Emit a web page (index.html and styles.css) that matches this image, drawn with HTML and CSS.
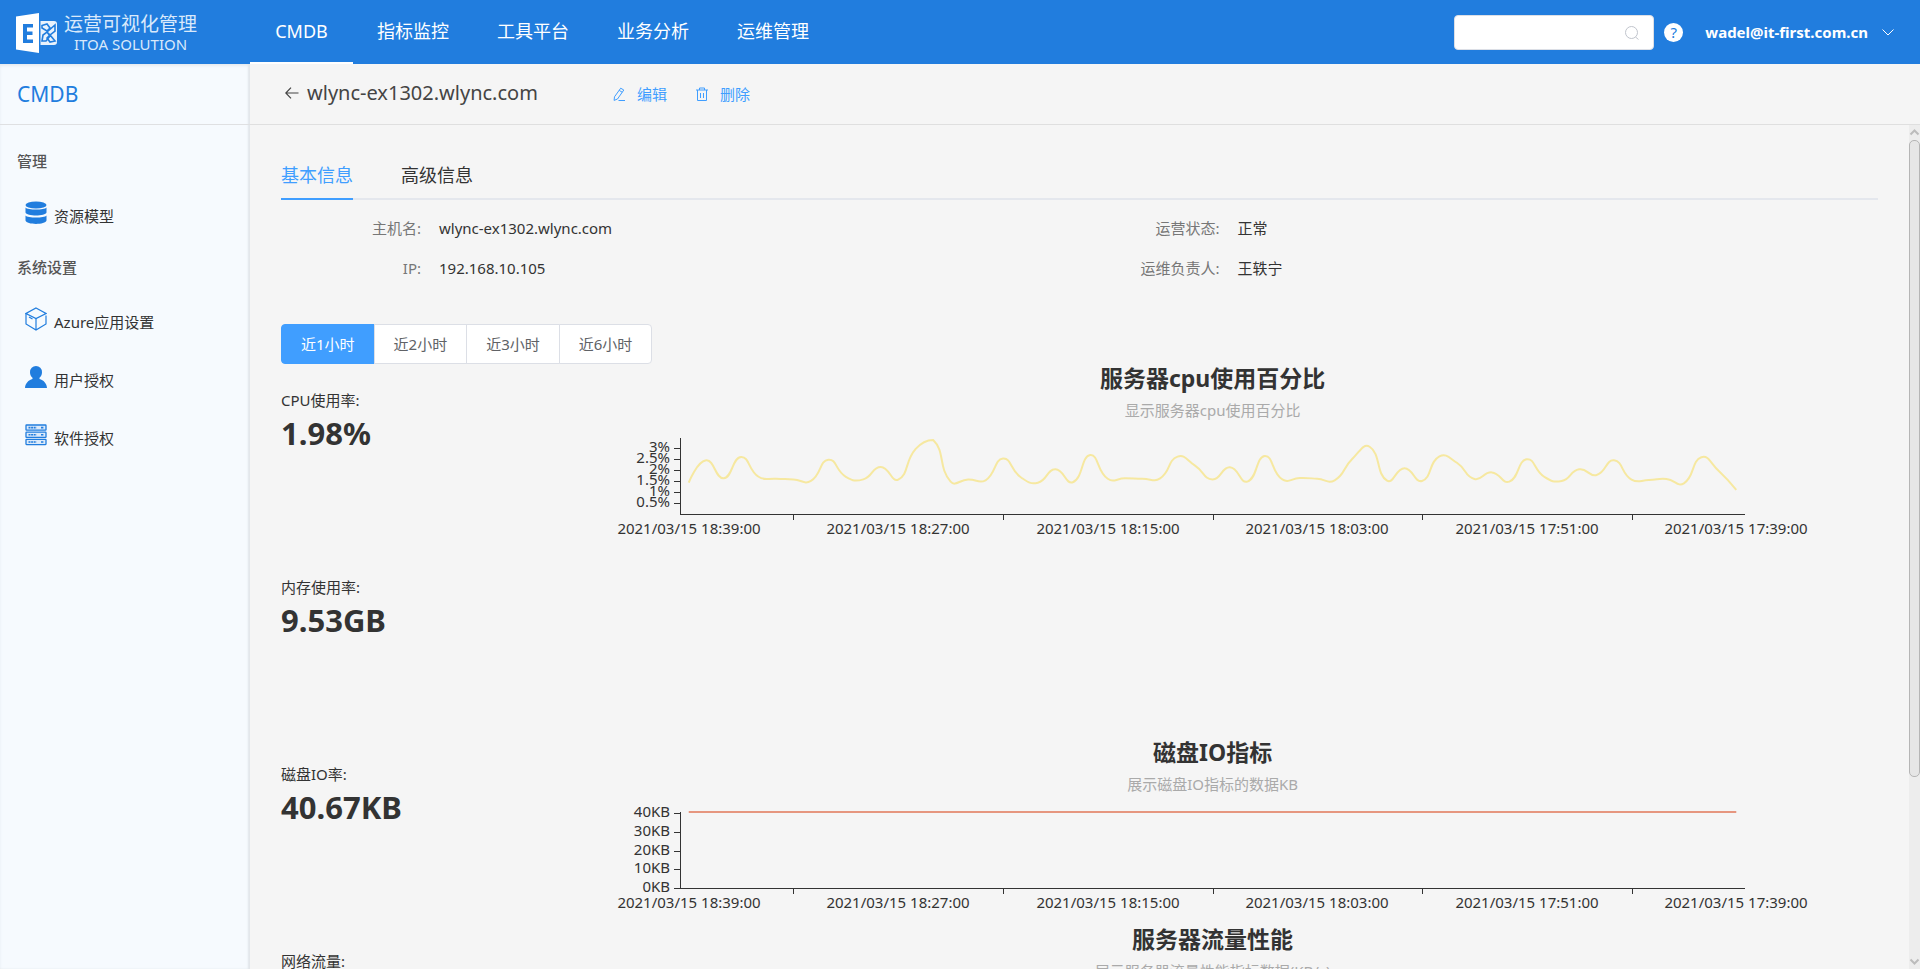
FILE: index.html
```html
<!DOCTYPE html>
<html lang="zh-CN">
<head>
<meta charset="utf-8">
<title>CMDB - 运营可视化管理</title>
<link rel="stylesheet" href="styles.css">
</head>
<body>
<header class="topbar">
  <a class="brand" href="#" aria-label="运营可视化管理">
    <svg class="brand-mark" viewBox="0 0 42 40" aria-hidden="true">
      <path d="M0 3.5 23 0v40L0 36.500z" fill="#fff"/>
      <path d="M7 11h10v3.500h-6v4h5.500V22H11v4.500h6V30H7z" fill="#217dde"/>
      <path d="M24.500 8H38a3 3 0 0 1 3 3v18a3 3 0 0 1-3 3H24.500z" fill="#e9f2fc"/>
      <path d="M26 12.500 31 11l3 4-3 3-5-3zM39 12v6l-5 4-3-3zM26 28l1-6 4-3 3 4-4 5zM39 28l-5 1-3-4 3-3z" fill="none" stroke="#217dde" stroke-width="1.600"/>
    </svg>
    <span class="brand-text"><span class="brand-cn">运营可视化管理</span><span class="brand-en">ITOA SOLUTION</span></span>
  </a>
  <nav class="mainnav">
    <a class="nav-link active" href="#">CMDB</a>
    <a class="nav-link" href="#">指标监控</a>
    <a class="nav-link" href="#">工具平台</a>
    <a class="nav-link" href="#">业务分析</a>
    <a class="nav-link" href="#">运维管理</a>
  </nav>
  <div class="tools">
    <label class="search">
      <input class="search-input" type="text" aria-label="搜索">
      <svg class="search-icon" viewBox="0 0 14 14" aria-hidden="true"><circle cx="6.500" cy="6.500" r="6"/><path d="m10.500 11 3 2.500"/></svg>
    </label>
    <button class="help" type="button" aria-label="帮助">?</button>
    <button class="user" type="button">wadel@it-first.com.cn
      <svg class="chevron" viewBox="0 0 12 7" aria-hidden="true"><path d="m.5.5 5.500 5.500L11.500.5"/></svg>
    </button>
  </div>
</header>
<div class="shell">
  <aside class="sidebar">
    <h1 class="side-title">CMDB</h1>
    <nav class="side-nav">
      <h2 class="side-group">管理</h2>
      <a class="side-link" href="#">
        <svg class="side-icon" viewBox="0 0 22 24" aria-hidden="true"><g fill="#217dde"><ellipse cx="11" cy="4" rx="10.500" ry="3.600"/><path d="M.5 6.500c2 2.700 19 2.700 21 0v5c-1 4-20 4-21 0z"/><path d="M.5 14.500c2 2.700 19 2.700 21 0v5c-1 4.500-20 4.500-21 0z"/></g></svg>
        资源模型</a>
      <h2 class="side-group">系统设置</h2>
      <a class="side-link" href="#">
        <svg class="side-icon" viewBox="0 0 22 24" aria-hidden="true"><g fill="none" stroke="#217dde" stroke-width="1.200"><path d="M11 1 21 6.500 11 11.500 1 6.500z"/><path d="M1 6.500V17l10 6 10-6V8.500M11 11.500V23M4 10l3.500 2"/></g></svg>
        Azure应用设置</a>
      <a class="side-link" href="#">
        <svg class="side-icon" viewBox="0 0 22 24" aria-hidden="true"><path fill="#217dde" d="M11 1a6 6 0 0 1 6 6.200c0 2.300-1 4.300-2.500 5.500v1.200c4 1.200 7.300 4.200 7.500 9.100H0c.2-4.900 3.500-7.900 7.500-9.100v-1.200C6 11.500 5 9.500 5 7.200A6 6 0 0 1 11 1z"/></svg>
        用户授权</a>
      <a class="side-link" href="#">
        <svg class="side-icon" viewBox="0 0 22 24" aria-hidden="true"><g fill="#dceafa" stroke="#217dde" stroke-width="1.300"><rect x="1" y="2" width="20" height="5.200" rx=".5"/><rect x="1" y="9.200" width="20" height="5.200" rx=".5"/><rect x="1" y="16.400" width="20" height="5.200" rx=".5"/></g><path d="M3.500 4.600h8M16 4.600h3M3.500 11.800h8M16 11.800h3M3.500 19h8M16 19h3" stroke="#217dde" stroke-width="1.600" stroke-dasharray="2 .6"/></svg>
        软件授权</a>
    </nav>
  </aside>
  <main class="main">
    <div class="page-head">
      <button class="back" type="button" aria-label="返回"><svg class="back-icon" viewBox="0 0 14 12" aria-hidden="true"><path d="M6 .7.8 6 6 11.300M.8 6H13.500"/></svg></button>
      <h2 class="page-title">wlync-ex1302.wlync.com</h2>
      <div class="actions">
        <button class="action" type="button"><svg class="action-icon" viewBox="0 0 14 14" aria-hidden="true"><path d="M8.700 1.200 11.800 3 5.500 12l-3.400 1.400.4-3.600zM7.200 3.400l3 1.800M6.500 13.500H13"/></svg>编辑</button>
        <button class="action" type="button"><svg class="action-icon" viewBox="0 0 14 14" aria-hidden="true"><path d="M1 3h12M4.500 3V1h5v2M2.500 3v10.500h9V3M5.500 6v5M8.500 6v5"/></svg>删除</button>
      </div>
    </div>
    <div class="scroll-wrap">
    <div class="scroll">
      <div class="tabs" role="tablist">
        <button class="tab active" type="button" role="tab" aria-selected="true">基本信息</button>
        <button class="tab" type="button" role="tab" aria-selected="false">高级信息</button>
      </div>
      <dl class="info">
        <div class="info-item"><dt>主机名:</dt><dd>wlync-ex1302.wlync.com</dd></div>
        <div class="info-item"><dt>运营状态:</dt><dd>正常</dd></div>
        <div class="info-item"><dt>IP:</dt><dd>192.168.10.105</dd></div>
        <div class="info-item"><dt>运维负责人:</dt><dd>王轶宁</dd></div>
      </dl>
      <div class="ranges">
        <button class="range active" type="button">近1小时</button>
        <button class="range" type="button">近2小时</button>
        <button class="range" type="button">近3小时</button>
        <button class="range" type="button">近6小时</button>
      </div>
      <section class="metric">
        <div class="stat"><p class="stat-name">CPU使用率:</p><p class="stat-value">1.98%</p></div>
        <div class="chart"><h3 class="chart-title">服务器cpu使用百分比</h3><p class="chart-sub">显示服务器cpu使用百分比</p><svg class="plot" data-chart="cpu"></svg></div>
      </section>
      <section class="metric">
        <div class="stat"><p class="stat-name">内存使用率:</p><p class="stat-value">9.53GB</p></div>
      </section>
      <section class="metric">
        <div class="stat"><p class="stat-name">磁盘IO率:</p><p class="stat-value">40.67KB</p></div>
        <div class="chart"><h3 class="chart-title">磁盘IO指标</h3><p class="chart-sub">展示磁盘IO指标的数据KB</p><svg class="plot" data-chart="disk"></svg></div>
      </section>
      <section class="metric">
        <div class="stat"><p class="stat-name">网络流量:</p></div>
        <div class="chart"><h3 class="chart-title">服务器流量性能</h3><p class="chart-sub">展示服务器流量性能指标数据(KB/s)</p></div>
      </section>
    </div>
    <div class="rail" aria-hidden="true">
      <svg class="rail-arrow" viewBox="0 0 11 8"><path d="m1.500 6 4-4 4 4"/></svg>
      <div class="rail-track"><div class="rail-thumb"></div><div class="rail-rest"></div></div>
      <svg class="rail-arrow" viewBox="0 0 11 8"><path d="m1.500 2 4 4 4-4"/></svg>
    </div>
    </div>
  </main>
</div>
<script src="charts.js"></script>
</body>
</html>
```

FILE: styles.css
```css
* { box-sizing: border-box; margin: 0; padding: 0; }

body {
  height: 100vh;
  display: flex;
  flex-direction: column;
  overflow: hidden;
  background: #f5f5f5;
  color: #333;
  font: 15px/20px "Noto Sans", "Noto Sans CJK SC", sans-serif;
}

a { color: inherit; text-decoration: none; }
button { font: inherit; color: inherit; background: none; border: 0; cursor: pointer; }

.topbar {
  flex: none;
  height: 64px;
  display: flex;
  background: #217dde;
  color: #fff;
}
.brand { width: 250px; padding: 2px 0 0 16px; display: flex; align-items: center; gap: 6px; }
.brand-mark { width: 42px; height: 40px; }
.brand-text { display: flex; flex-direction: column; align-items: center; color: #d9e9fb; }
.brand-cn { font-size: 19px; line-height: 22px; }
.brand-en { font-size: 15px; line-height: 18px; }

.mainnav { display: flex; }
.nav-link {
  min-width: 103px;
  padding: 0 24px;
  font-size: 18px;
  line-height: 62px;
  text-align: center;
  border-bottom: 2px solid transparent;
}
.nav-link.active { border-color: #fff; }

.tools { margin-left: auto; padding-right: 26px; display: flex; align-items: center; }
.search { position: relative; display: flex; }
.search-input {
  width: 200px;
  height: 35px;
  padding: 0 36px 0 12px;
  border: 1px solid #dcdfe6;
  border-radius: 4px;
  background: #fff;
  font: inherit;
}
.search-icon {
  position: absolute;
  right: 15px;
  top: 11px;
  width: 14px;
  height: 14px;
  fill: none;
  stroke: #c0c4cc;
}
.help {
  width: 19px;
  height: 19px;
  margin-left: 10px;
  border-radius: 50%;
  background: #fff;
  color: #217dde;
  font-size: 15px;
  line-height: 19px;
}
.user { margin-left: 22px; display: flex; align-items: center; gap: 14px; font-weight: 700; }
.chevron { width: 12px; height: 7px; fill: none; stroke: #fff; }

.shell { flex: 1; min-height: 0; display: flex; }
.sidebar {
  flex: none;
  width: 250px;
  background: #f6fafe;
  box-shadow: inset -2px 0 2px #e2e6ea, inset 0 2px 3px #e6ecf2;
}
.side-title {
  height: 61px;
  padding-left: 17px;
  border-bottom: 1px solid #dfe0e2;
  color: #217dde;
  font-size: 21px;
  font-weight: 400;
  line-height: 60px;
}
.side-nav { padding-top: 12px; }
.side-group { padding-left: 17px; color: #555; font-size: 15px; font-weight: 500; line-height: 48px; }
.side-link { height: 58px; padding: 3px 0 0 25px; display: flex; align-items: center; gap: 7px; }
.side-icon { width: 22px; height: 24px; margin-bottom: 6px; }

.main { flex: 1; min-width: 0; display: flex; flex-direction: column; }
.page-head {
  flex: none;
  height: 61px;
  padding: 0 0 2px 35px;
  display: flex;
  align-items: center;
  border-bottom: 1px solid #dfdfdf;
}
.back { display: flex; }
.back-icon { width: 14px; height: 12px; fill: none; stroke: #444; stroke-width: 1.2; }
.page-title { margin: 0 74px 0 8px; color: #444; font-size: 20px; font-weight: 400; line-height: 28px; }
.actions { padding-top: 2px; display: flex; gap: 28px; }
.action { display: flex; align-items: center; gap: 11px; color: #409eff; }
.action-icon { width: 14px; height: 14px; fill: none; stroke: #409eff; }

.scroll-wrap { flex: 1; min-height: 0; display: flex; }
.scroll { flex: 1; min-width: 0; padding: 27px 31px 0; overflow-y: auto; scrollbar-width: none; }

.tabs { display: flex; gap: 48px; border-bottom: 2px solid #e4e7ed; }
.tab { height: 48px; margin-bottom: -2px; border-bottom: 2px solid transparent; font-size: 18px; line-height: 44px; }
.tab.active { color: #409eff; border-color: #409eff; }

.info { padding-top: 8px; display: grid; grid-template-columns: 1fr 1fr; }
.info-item { display: flex; gap: 18px; line-height: 40px; }
.info-item dt { width: 140px; text-align: right; color: #777; }

.ranges { padding-top: 36px; display: flex; }
.range {
  height: 40px;
  margin-left: -1px;
  padding: 0 19px;
  border: 1px solid #dcdfe6;
  background: #fff;
  color: #606266;
}
.range:first-child { margin-left: 0; border-radius: 4px 0 0 4px; }
.range:last-child { border-radius: 0 4px 4px 0; }
.range.active { background: #409eff; border-color: #409eff; color: #fff; }

.metric { height: 187px; display: grid; grid-template-columns: 1fr 5fr; }
.stat { padding-top: 26px; }
.stat-value { font-size: 31px; font-weight: 700; line-height: 46px; }
.chart { min-width: 0; text-align: center; }
.chart-title { font-size: 23px; line-height: 28px; }
.chart-sub { padding-top: 8px; color: #aaa; line-height: 20px; }
.plot { display: block; width: 100%; height: 130px; font-size: 15px; fill: #333; }
.axis { fill: none; stroke: #333; shape-rendering: crispEdges; }
.line { fill: none; stroke-width: 2; }
.line-cpu { stroke: #f6e8a0; }
.line-disk { stroke: #e6967f; }
.tick-x { text-anchor: middle; }
.tick-y { text-anchor: end; }

.rail { flex: none; width: 11px; display: flex; flex-direction: column; background: #ededed; }
.rail-arrow { width: 11px; height: 15px; fill: none; stroke: #bcbcbc; stroke-width: 2; }
.rail-track { flex: 1; display: flex; flex-direction: column; }
.rail-thumb { flex: 637; border: 1px solid #b5b5b5; border-radius: 5px; background: #e6e6e6; }
.rail-rest { flex: 177; }
```

FILE: charts.js
```javascript
const SVG = 'http://www.w3.org/2000/svg';
const times = ['18:39', '18:27', '18:15', '18:03', '17:51', '17:39'].map(t => '2021/03/15 ' + t + ':00');
const charts = {
  cpu: {
    max: 3.47,
    ticks: [0.5, 1, 1.5, 2, 2.5, 3],
    unit: '%',
    data: [1.43, 2.45, 1.63, 2.60, 1.70, 1.61, 1.58, 1.51, 2.48, 1.70, 1.58, 2.15, 1.57, 2.97, 3.38,
      1.48, 1.58, 1.54, 2.53, 1.69, 1.43, 2.04, 1.45, 2.69, 1.61, 1.63, 1.61, 1.63, 2.62, 2.21,
      1.58, 2.13, 1.48, 2.65, 1.58, 1.64, 1.61, 1.54, 2.51, 3.07, 1.52, 2.09, 1.51, 2.63, 2.34,
      1.60, 1.90, 1.48, 2.50, 1.70, 1.51, 2.04, 1.78, 2.45, 1.57, 1.55, 1.60, 1.40, 2.59, 1.96, 1.10]
  },
  disk: { max: 40.67, ticks: [0, 10, 20, 30, 40], unit: 'KB', data: Array(61).fill(40.67) }
};
const TOP = 18, BOTTOM = 94;

function add(svg, name, attrs, text) {
  const el = document.createElementNS(SVG, name);
  for (const key in attrs) el.setAttribute(key, attrs[key]);
  if (text) el.textContent = text;
  svg.appendChild(el);
}

/* Smooth curve: each control point follows the chord between its neighbours. */
function curve(pts) {
  const clamp = y => Math.max(Math.min(...pts.map(p => p[1])), Math.min(y, BOTTOM));
  let d = 'M' + pts[0];
  let c0 = pts[0];
  for (let i = 1; i < pts.length; i++) {
    const p = pts[i], prev = pts[i - 1], next = pts[i + 1] || p;
    const before = Math.hypot(p[0] - prev[0], p[1] - prev[1]);
    const after = Math.hypot(next[0] - p[0], next[1] - p[1]);
    const ratio = after / (after + before);
    const vx = (next[0] - prev[0]) / 2, vy = (next[1] - prev[1]) / 2;
    const last = i === pts.length - 1;
    const c1 = last ? p : [p[0] - vx * (1 - ratio), clamp(p[1] - vy * (1 - ratio))];
    d += 'C' + [c0, c1, p].join(' ');
    c0 = [p[0] + vx * ratio, clamp(p[1] + vy * ratio)];
  }
  return d;
}

function draw(svg) {
  const kind = svg.dataset.chart, c = charts[kind];
  const width = svg.clientWidth, left = Math.round(width * 0.1), right = Math.round(width * 0.9);
  const band = (right - left) / c.data.length;
  const y = v => BOTTOM - v / c.max * (BOTTOM - TOP);
  svg.replaceChildren();
  let axis = `M${left} ${TOP}V${BOTTOM}H${right}`;
  c.ticks.forEach(v => {
    const ty = Math.round(y(v));
    axis += `M${left - 6} ${ty}H${left}`;
    add(svg, 'text', { class: 'tick-y', x: left - 10, y: ty + 4 }, v + c.unit);
  });
  times.forEach((t, i) => {
    const cx = left + band * (12 * i + 0.5);
    if (i) axis += `M${Math.round(cx - band * 6)} ${BOTTOM}v6`;
    add(svg, 'text', { class: 'tick-x', x: Math.round(cx), y: BOTTOM + 20 }, t);
  });
  add(svg, 'path', { class: 'axis', d: axis });
  const pts = c.data.map((v, i) => [left + band * (i + 0.5), y(v)]);
  add(svg, 'path', { class: 'line line-' + kind, d: curve(pts) });
}

function drawAll() { document.querySelectorAll('.plot').forEach(draw); }
window.addEventListener('resize', drawAll);
drawAll();
```
